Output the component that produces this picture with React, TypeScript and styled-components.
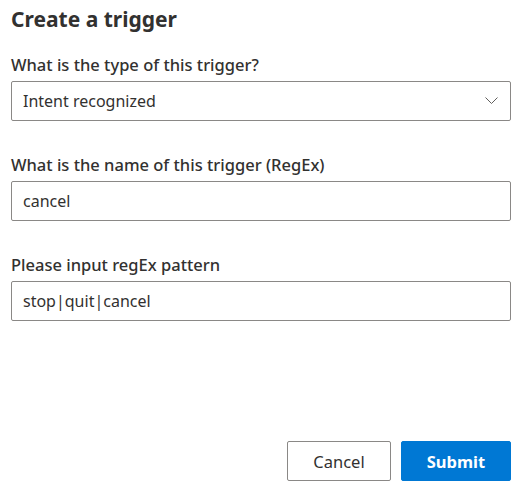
import styled, { createGlobalStyle } from 'styled-components';

const GlobalStyle = createGlobalStyle`
  html, body {
    margin: 0;
    padding: 0;
    background: #fff;
  }
  * {
    box-sizing: border-box;
  }
`;

const Page = styled.div`
  width: 521px;
  height: 489px;
  display: flex;
  flex-direction: column;
  padding: 3px 10px 8px 11px;
  font-family: "Noto Sans", "Open Sans", sans-serif;
  color: #323130;
`;

const Title = styled.h1`
  margin: 0 0 18px;
  font-size: 21px;
  line-height: 32px;
  font-weight: 700;
  color: #323130;
`;

const Field = styled.div`
  display: flex;
  flex-direction: column;
  margin-bottom: 32px;
`;

const Label = styled.label`
  font-size: 16.5px;
  line-height: 24px;
  font-weight: 500;
  margin-bottom: 4px;
`;

const Box = styled.div`
  position: relative;
  display: flex;
  align-items: center;
  height: 40px;
  padding: 0 11px;
  border: 1px solid #8a8886;
  border-radius: 2px;
  font-size: 16px;
  color: #323130;
`;

const Chevron = styled.svg`
  position: absolute;
  right: 12px;
  top: 15px;
`;

const Footer = styled.div`
  margin-top: auto;
  display: flex;
  justify-content: flex-end;
  gap: 10px;
`;

const Button = styled.button<{ $primary?: boolean }>`
  height: 40px;
  min-width: ${(p) => (p.$primary ? '110px' : '104px')};
  padding: 0 20px;
  border-radius: 2px;
  font-family: "Noto Sans", "Open Sans", sans-serif;
  font-size: 16.5px;
  font-weight: ${(p) => (p.$primary ? 700 : 400)};
  border: 1px solid ${(p) => (p.$primary ? '#0078d4' : '#8a8886')};
  background: ${(p) => (p.$primary ? '#0078d4' : '#fff')};
  color: ${(p) => (p.$primary ? '#fff' : '#323130')};
  cursor: pointer;
`;

export default function App() {
  return (
    <Page>
      <GlobalStyle />
      <Title>Create a trigger</Title>
      <Field>
        <Label>What is the type of this trigger?</Label>
        <Box>
          Intent recognized
          <Chevron width="13" height="8" viewBox="0 0 13 8" fill="none">
            <path d="M0.5 0.5 L6.5 6.5 L12.5 0.5" stroke="#605e5c" strokeWidth="1" />
          </Chevron>
        </Box>
      </Field>
      <Field>
        <Label>What is the name of this trigger (RegEx)</Label>
        <Box>cancel</Box>
      </Field>
      <Field>
        <Label>Please input regEx pattern</Label>
        <Box>stop|quit|cancel</Box>
      </Field>
      <Footer>
        <Button>Cancel</Button>
        <Button $primary>Submit</Button>
      </Footer>
    </Page>
  );
}
